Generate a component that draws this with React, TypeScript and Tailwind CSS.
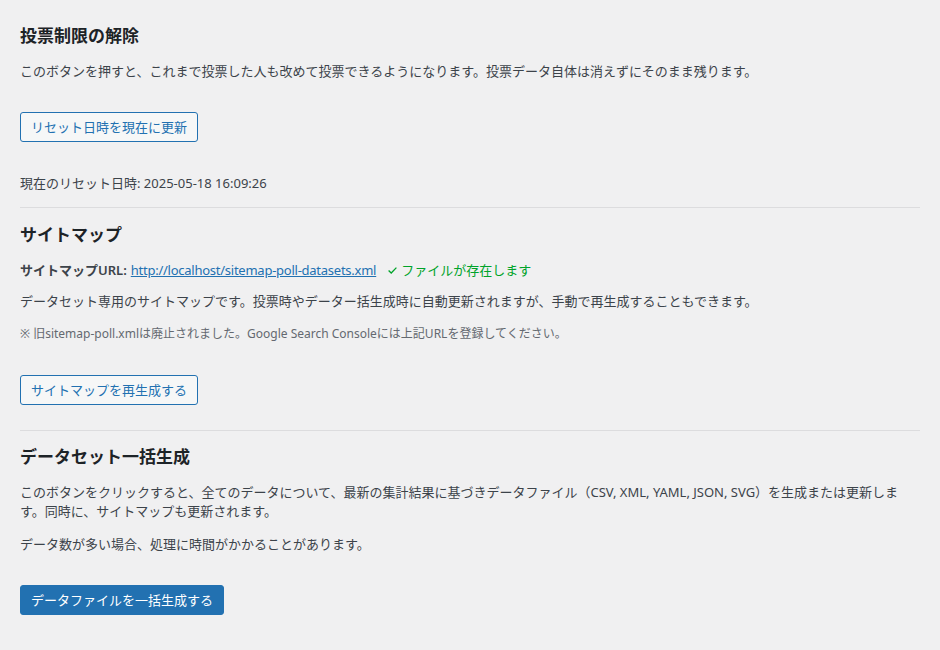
import React from 'react';

const font = { fontFamily: '"Noto Sans", "Noto Sans CJK JP", sans-serif' };

export default function App() {
  return (
    <main className="min-h-[650px] bg-[#f0f0f1] px-5 pt-[24px] text-[13px] leading-[20px] text-[#3c434a]" style={font}>
      {/* 投票制限 */}
      <section>
        <h2 className="text-[17px] font-semibold leading-[24px] text-[#1d2327]">投票制限の解除</h2>
        <p className="mt-[13px]">このボタンを押すと、これまで投票した人も改めて投票できるようになります。投票データ自体は消えずにそのまま残ります。</p>
        <div className="mt-[31px]">
          <button className="h-[30px] rounded-[3px] border border-[#2271b1] bg-[#f6f7f7] px-[10px] text-[13px] text-[#2271b1]">
            リセット日時を現在に更新
          </button>
        </div>
        <p className="mt-[31px]">現在のリセット日時: 2025-05-18 16:09:26</p>
      </section>

      <hr className="mt-[14px] border-t border-[#dcdcde]" />

      {/* サイトマップ */}
      <section>
        <h2 className="mt-[15px] text-[17px] font-semibold leading-[24px] text-[#1d2327]">サイトマップ</h2>
        <p className="mt-[13px] flex items-center">
          <strong className="font-semibold">サイトマップURL:</strong>
          <a href="#" className="ml-[4px] tracking-[-0.25px] text-[#2271b1] underline">http://localhost/sitemap-poll-datasets.xml</a>
          <span className="ml-[12px] inline-flex items-center gap-[4px] text-[#00a32a]">
            <svg width="9" height="7" viewBox="0 0 9 7" fill="none" stroke="#00a32a" strokeWidth="1.3">
              <path d="M0.6 3.6 L3.2 6 L8.4 0.6" />
            </svg>
            ファイルが存在します
          </span>
        </p>
        <p className="mt-[11px]">データセット専用のサイトマップです。投票時やデーター括生成時に自動更新されますが、手動で再生成することもできます。</p>
        <p className="mt-[14px] text-[12px] leading-[18px] text-[#646970]">※ 旧sitemap-poll.xmlは廃止されました。Google Search Consoleには上記URLを登録してください。</p>
        <div className="mt-[32px]">
          <button className="h-[30px] rounded-[3px] border border-[#2271b1] bg-[#f6f7f7] px-[10px] text-[13px] text-[#2271b1]">
            サイトマップを再生成する
          </button>
        </div>
      </section>

      <hr className="mt-[25px] border-t border-[#dcdcde]" />

      {/* 一括生成 */}
      <section>
        <h2 className="mt-[14px] text-[17px] font-semibold leading-[24px] text-[#1d2327]">データセット一括生成</h2>
        <p className="mt-[14px] max-w-[900px] leading-[19px]">このボタンをクリックすると、全てのデータについて、最新の集計結果に基づきデータファイル（CSV, XML, YAML, JSON, SVG）を生成または更新します。同時に、サイトマップも更新されます。</p>
        <p className="mt-[13px]">データ数が多い場合、処理に時間がかかることがあります。</p>
        <div className="mt-[31px]">
          <button className="h-[30px] rounded-[3px] border border-[#2271b1] bg-[#2271b1] px-[10px] text-[13px] text-white">
            データファイルを一括生成する
          </button>
        </div>
      </section>
    </main>
  );
}
